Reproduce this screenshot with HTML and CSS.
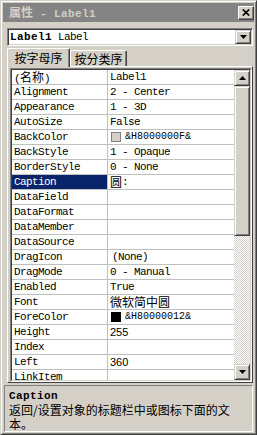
FILE: index.html
```html
<!DOCTYPE html>
<html lang="zh-CN">
<head>
    <meta charset="UTF-8" />
    <title>属性 - Label1</title>
    <link rel="stylesheet" href="styles.css">
</head>
<body>
    <div class="window">
        <div class="titlebar">
            <span class="title"><span class="cjk">属性</span> - Label1</span>
            <span class="close-btn">
                <svg width="8" height="7" viewBox="0 0 8 7"><path d="M0.8 0.5L7.2 6.5M7.2 0.5L0.8 6.5" stroke="#000" stroke-width="1.7" fill="none"/></svg>
            </span>
        </div>

        <div class="combo">
            <span class="combo-text"><b>Label1</b> Label</span>
            <span class="drop-btn">
                <svg width="7" height="4" viewBox="0 0 7 4"><path d="M0 0H7L3.5 4Z" fill="#000"/></svg>
            </span>
        </div>

        <div class="tabs">
            <div class="tab active">按字母序</div>
            <div class="tab">按分类序</div>
        </div>

        <div class="panel">
            <div class="grid">
                <div class="grid-body">
                    <div class="rows">
                        <div class="row"><div class="name">(<span class="cjk">名称</span>)</div><div class="value">Label1</div></div>
                        <div class="row"><div class="name">Alignment</div><div class="value">2 - Center</div></div>
                        <div class="row"><div class="name">Appearance</div><div class="value">1 - 3D</div></div>
                        <div class="row"><div class="name">AutoSize</div><div class="value">False</div></div>
                        <div class="row"><div class="name">BackColor</div><div class="value"><i class="swatch"></i><span class="small">&amp;H8000000F&amp;</span></div></div>
                        <div class="row"><div class="name">BackStyle</div><div class="value">1 - Opaque</div></div>
                        <div class="row"><div class="name">BorderStyle</div><div class="value">0 - None</div></div>
                        <div class="row selected"><div class="name">Caption</div><div class="value"><span class="cjk">圆</span>:</div></div>
                        <div class="row"><div class="name">DataField</div><div class="value"></div></div>
                        <div class="row"><div class="name">DataFormat</div><div class="value"></div></div>
                        <div class="row"><div class="name">DataMember</div><div class="value"></div></div>
                        <div class="row"><div class="name">DataSource</div><div class="value"></div></div>
                        <div class="row"><div class="name">DragIcon</div><div class="value"><span class="indent">(None)</span></div></div>
                        <div class="row"><div class="name">DragMode</div><div class="value">0 - Manual</div></div>
                        <div class="row"><div class="name">Enabled</div><div class="value">True</div></div>
                        <div class="row"><div class="name">Font</div><div class="value"><span class="cjk">微软简中圆</span></div></div>
                        <div class="row"><div class="name">ForeColor</div><div class="value"><i class="swatch black"></i><span class="small">&amp;H80000012&amp;</span></div></div>
                        <div class="row"><div class="name">Height</div><div class="value"><span class="sans">255</span></div></div>
                        <div class="row"><div class="name">Index</div><div class="value"></div></div>
                        <div class="row"><div class="name">Left</div><div class="value"><span class="sans">360</span></div></div>
                        <div class="row"><div class="name">LinkItem</div><div class="value"></div></div>
                    </div>
                    <div class="scrollbar">
                        <div class="sb-btn">
                            <svg width="7" height="4" viewBox="0 0 7 4"><path d="M0 4H7L3.5 0Z" fill="#000"/></svg>
                        </div>
                        <div class="sb-thumb"></div>
                        <div class="sb-track"></div>
                        <div class="sb-btn">
                            <svg width="7" height="4" viewBox="0 0 7 4"><path d="M0 0H7L3.5 4Z" fill="#000"/></svg>
                        </div>
                    </div>
                </div>
            </div>
        </div>

        <div class="desc">
            <div class="desc-title">Caption</div>
            <div class="desc-text">返回/设置对象的标题栏中或图标下面的文本。</div>
        </div>
    </div>
</body>
</html>
```

FILE: styles.css
```css
:root {
    --face: #d4d0c8;
    --shadow: #808080;
    --dark: #404040;
    --light: #ffffff;
    --select: #0a246a;
    --line: #c0c0c0;
    --caption-bg: #848484;
}

* {
    box-sizing: border-box;
    margin: 0;
    padding: 0;
}

body {
    width: 257px;
    height: 435px;
    overflow: hidden;
    background: var(--face);
    color: #000;
    font-family: "Liberation Mono", "Noto Sans CJK SC", monospace;
    font-size: 11px;
    letter-spacing: -0.6px;
}

.cjk {
    font-family: "Noto Sans CJK SC", sans-serif;
    font-size: 12px;
    letter-spacing: 0;
    line-height: 14px;
}

.sans {
    font-family: "Liberation Sans", sans-serif;
    font-size: 11px;
    letter-spacing: 0;
}

/* Ventana */
.window {
    width: 257px;
    height: 435px;
    padding: 2px;
    border: 1px solid;
    border-color: var(--face) var(--dark) var(--dark) var(--face);
    box-shadow: inset 1px 1px var(--light), inset -1px -1px var(--shadow);
    display: flex;
    flex-direction: column;
}

.titlebar {
    height: 19px;
    flex-shrink: 0;
    background: var(--caption-bg);
    display: flex;
    align-items: center;
    justify-content: space-between;
    padding-left: 6px;
}

.title {
    color: var(--face);
    font-weight: bold;
    letter-spacing: 0.4px;
    line-height: 14px;
    white-space: pre;
}

.title .cjk {
    font-weight: bold;
}

.close-btn {
    width: 16px;
    height: 14px;
    background: var(--face);
    border: 1px solid;
    border-color: var(--light) var(--dark) var(--dark) var(--light);
    box-shadow: inset -1px -1px var(--shadow);
    display: flex;
    align-items: center;
    justify-content: center;
}

/* Combo */
.combo {
    height: 18px;
    flex-shrink: 0;
    margin: 6px 1px 0 4px;
    background: #fff;
    border: 1px solid;
    border-color: var(--shadow) var(--light) var(--light) var(--shadow);
    box-shadow: inset 1px 1px var(--dark), inset -1px -1px var(--face);
    display: flex;
    align-items: center;
    justify-content: space-between;
    padding: 0 1px 0 2px;
}

.combo-text {
    line-height: 14px;
    white-space: pre;
}

.combo-text b {
    letter-spacing: 0.4px;
}

.drop-btn {
    width: 16px;
    height: 14px;
    background: var(--face);
    border: 1px solid;
    border-color: var(--face) var(--dark) var(--dark) var(--face);
    box-shadow: inset 1px 1px var(--light), inset -1px -1px var(--shadow);
    display: flex;
    align-items: center;
    justify-content: center;
}

/* Pestañas */
.tabs {
    height: 18px;
    flex-shrink: 0;
    margin: 2px 0 0 4px;
    display: flex;
    align-items: flex-end;
}

.tab {
    height: 16px;
    width: 57px;
    background: var(--face);
    border-top: 1px solid var(--light);
    border-left: 1px solid var(--light);
    border-right: 1px solid var(--dark);
    box-shadow: inset -1px 0 var(--shadow);
    border-radius: 2px 2px 0 0;
    display: flex;
    align-items: center;
    justify-content: center;
    font-family: "Noto Sans CJK SC", sans-serif;
    font-size: 12px;
    letter-spacing: 0;
    line-height: 14px;
}

.tab.active {
    width: 63px;
    height: 19px;
    margin-bottom: -1px;
    position: relative;
    z-index: 1;
    padding-bottom: 1px;
}

.panel {
    height: 317px;
    flex-shrink: 0;
    margin: 0 1px 0 4px;
    border: 1px solid;
    border-color: var(--light) var(--dark) var(--dark) var(--light);
    padding: 1px 0 0 2px;
}

.grid {
    border: 1px solid;
    border-color: var(--shadow) var(--light) var(--light) var(--shadow);
    width: 242px;
}

.grid-body {
    border: 1px solid;
    border-color: var(--dark) var(--face) var(--face) var(--dark);
    display: flex;
    height: 312px;
}

.rows {
    width: 222px;
    height: 310px;
    overflow: hidden;
    background: #fff;
}

.row {
    height: 15px;
    display: flex;
    border-bottom: 1px solid var(--line);
    line-height: 14px;
    white-space: nowrap;
}

.name {
    width: 96px;
    flex-shrink: 0;
    border-right: 1px solid var(--line);
    padding-left: 2px;
}

.value {
    flex: 1;
    padding-left: 2px;
    display: flex;
    align-items: center;
}

.row.selected .name {
    background: var(--select);
    color: #fff;
}

.swatch {
    width: 10px;
    height: 10px;
    border: 1px solid var(--shadow);
    background: var(--face);
    margin: 0 4px 0 1px;
    flex-shrink: 0;
}

.swatch.black {
    background: #000;
    border-color: #000;
}

.small {
    font-size: 10px;
    letter-spacing: 0;
}

.indent {
    margin-left: 2px;
}

/* Barra de desplazamiento */
.scrollbar {
    width: 16px;
    display: flex;
    flex-direction: column;
}

.sb-btn,
.sb-thumb {
    background: var(--face);
    border: 1px solid;
    border-color: var(--face) var(--dark) var(--dark) var(--face);
    box-shadow: inset 1px 1px var(--light), inset -1px -1px var(--shadow);
}

.sb-btn {
    height: 16px;
    display: flex;
    align-items: center;
    justify-content: center;
}

.sb-thumb {
    height: 150px;
}

.sb-track {
    height: 128px;
    background-image: conic-gradient(#fff 25%, var(--face) 0 50%, #fff 0 75%, var(--face) 0);
    background-size: 2px 2px;
}

/* Descripción */
.desc {
    flex: 1;
    margin: 2px 1px 0 1px;
    border: 1px solid;
    border-color: var(--shadow) var(--light) var(--light) var(--shadow);
    padding: 4px 17px 0 4px;
}

.desc-title {
    font-weight: bold;
    letter-spacing: 0.4px;
    line-height: 13px;
}

.desc-text {
    font-family: "Noto Sans CJK SC", sans-serif;
    font-size: 12px;
    letter-spacing: 0;
    line-height: 14px;
}
```
